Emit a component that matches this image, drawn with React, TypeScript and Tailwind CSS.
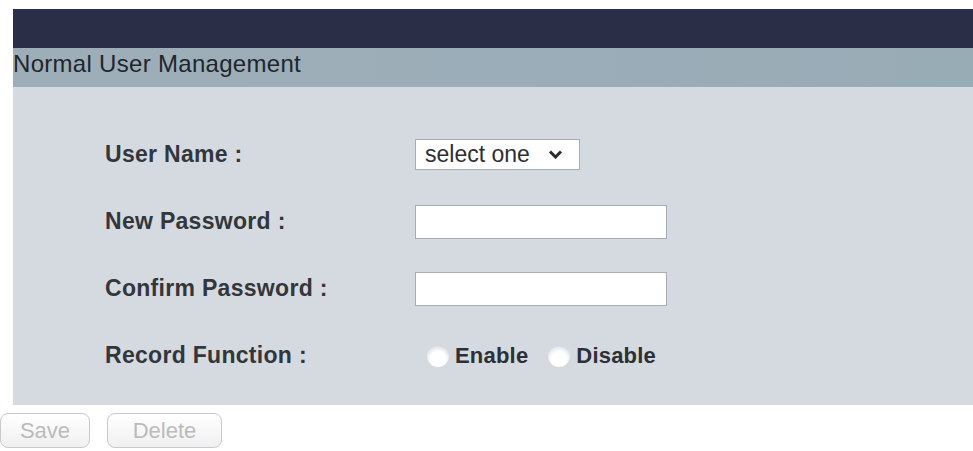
import React from "react";

const rows = ["User Name :", "New Password :", "Confirm Password :", "Record Function :"];

const Radio: React.FC<{ label: string }> = ({ label }) => (
  <label className="flex items-center gap-[6px]">
    <span className="block h-[22px] w-[22px] rounded-full bg-[radial-gradient(circle_at_50%_65%,#ffffff_42%,#e6e9ed_65%,#aeb4bd_100%)]" />
    <span className="font-bold text-[22px] tracking-[0.2px] text-[#2d3036]">{label}</span>
  </label>
);

const App: React.FC = () => {
  return (
    <div className="h-[451px] w-[973px] overflow-hidden bg-white font-['Liberation_Sans',Arial,sans-serif]">
      <div className="pl-[13px] pt-[9px]">
        {/* Title bars */}
        <div className="h-[39px] bg-[#2a2f47]" />
        <div className="h-[39px] bg-[linear-gradient(90deg,#9eaeb9,#98acb6)] text-[24px] leading-[31px] tracking-[0.3px] text-[#1f262d]">
          Normal User Management
        </div>

        {/* Form */}
        <div className="h-[318px] bg-[#d5dae0] pl-[92px] pt-[34px]">
          {rows.map((label, i) => (
            <div key={label} className="flex h-[67px] items-center">
              <div className="w-[310px] font-bold text-[23px] tracking-[0.3px] text-[#33363b]">{label}</div>
              {i === 0 && (
                <div className="flex h-[31px] w-[165px] items-center justify-between border border-[#a7adb5] bg-white pl-[9px] pr-[16px] text-[23px] text-[#2c2f33]">
                  <span>select one</span>
                  <svg width="15" height="9" viewBox="0 0 15 9">
                    <polyline points="2,1.5 7.5,7 13,1.5" fill="none" stroke="#2a2d33" strokeWidth="3" />
                  </svg>
                </div>
              )}
              {(i === 1 || i === 2) && (
                <input type="password" className="h-[34px] w-[252px] border border-[#a7adb5] bg-white outline-none" />
              )}
              {i === 3 && (
                <div className="flex items-center gap-[20px] pl-[12px]">
                  <Radio label="Enable" />
                  <Radio label="Disable" />
                </div>
              )}
            </div>
          ))}
        </div>
      </div>

      {/* Buttons */}
      <div className="mt-[8px] flex gap-[17px]">
        <button className="h-[35px] w-[90px] rounded-[8px] border border-[#c9c9c9] bg-[linear-gradient(#ffffff,#f0f0f0)] text-[22px] text-[#bbbbbb]">
          Save
        </button>
        <button className="h-[35px] w-[115px] rounded-[8px] border border-[#c9c9c9] bg-[linear-gradient(#ffffff,#f0f0f0)] text-[22px] text-[#bbbbbb]">
          Delete
        </button>
      </div>
    </div>
  );
};

export default App;
